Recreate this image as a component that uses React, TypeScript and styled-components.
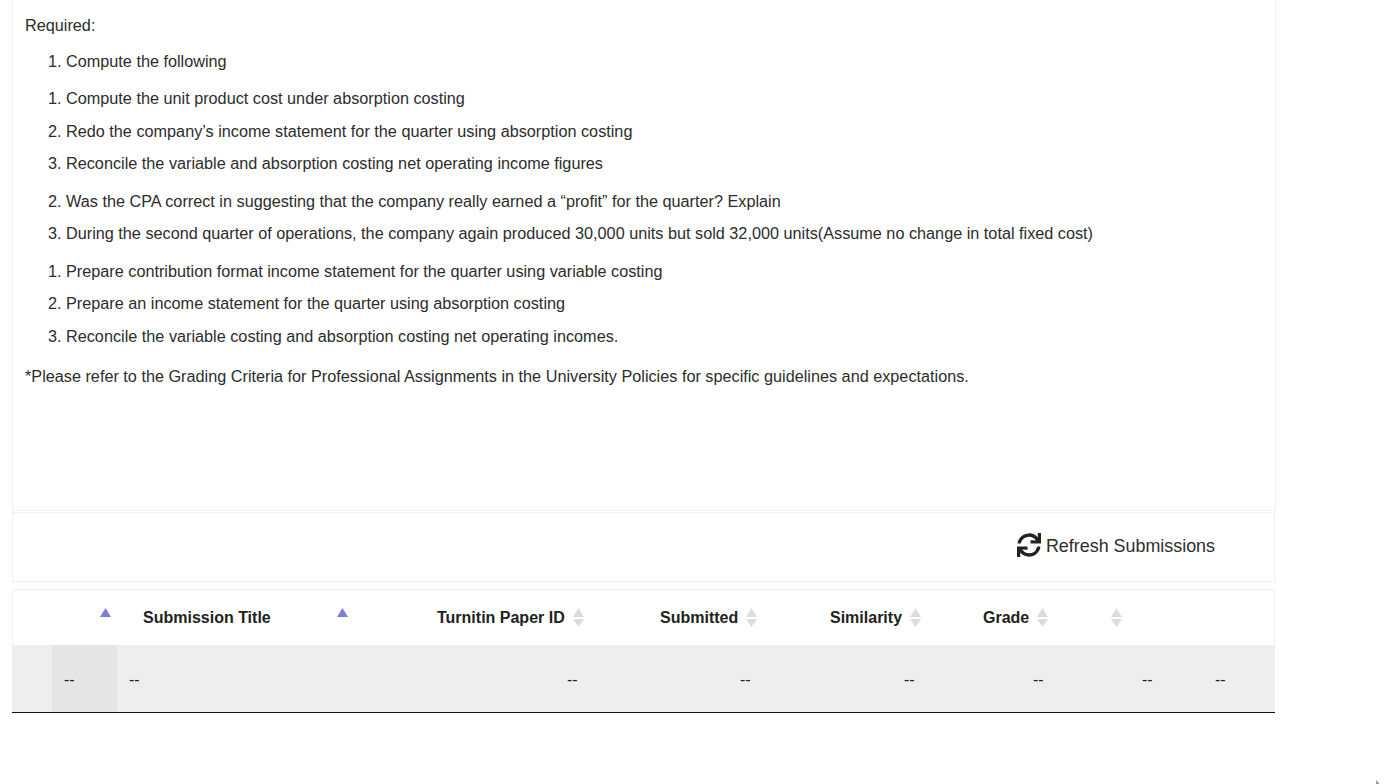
import React from 'react';
import styled, { createGlobalStyle } from 'styled-components';
import { FaSync } from 'react-icons/fa';

const GlobalStyle = createGlobalStyle`
  html, body {
    margin: 0;
    padding: 0;
    background: #fff;
    overflow: hidden;
    font-family: "Liberation Sans", Arial, sans-serif;
    color: #222;
  }
`;

const firstSteps = [
  'Compute the unit product cost under absorption costing',
  'Redo the company’s income statement for the quarter using absorption costing',
  'Reconcile the variable and absorption costing net operating income figures',
];

const lastSteps = [
  'Prepare contribution format income statement for the quarter using variable costing',
  'Prepare an income statement for the quarter using absorption costing',
  'Reconcile the variable costing and absorption costing net operating incomes.',
];

const App: React.FC = () => {
  return (
    <Page>
      <GlobalStyle />
      <Instructions>
        <Para>Required:</Para>
        <List>
          <Item $top={18}>Compute the following</Item>
        </List>
        <List>
          {firstSteps.map((s, i) => (
            <Item key={s} $top={i === 0 ? 19 : i === 1 ? 15 : 14}>{s}</Item>
          ))}
        </List>
        <List start={2}>
          <Item $top={20}>
            Was the CPA correct in suggesting that the company really earned a “profit” for the quarter? Explain
          </Item>
          <Item $top={14}>
            During the second quarter of operations, the company again produced 30,000 units but sold 32,000
            units(Assume no change in total fixed cost)
          </Item>
        </List>
        <List>
          {lastSteps.map((s, i) => (
            <Item key={s} $top={i === 0 ? 20 : i === 1 ? 14 : 15}>{s}</Item>
          ))}
        </List>
        <Footnote>
          *Please refer to the Grading Criteria for Professional Assignments in the University Policies for
          specific guidelines and expectations.
        </Footnote>
      </Instructions>

      <Toolbar>
        <RefreshButton>
          <RefreshIcon size={24} />
          Refresh Submissions
        </RefreshButton>
      </Toolbar>

      <TablePanel>
        <HeadRow>
          <HeadCell><SortUp /></HeadCell>
          <HeadCell>Submission Title<Spacer /><SortUp /></HeadCell>
          <HeadCell>Turnitin Paper ID<SortBoth /></HeadCell>
          <HeadCell>Submitted<SortBoth /></HeadCell>
          <HeadCell>Similarity<SortBoth /></HeadCell>
          <HeadCell>Grade<SortBoth /></HeadCell>
          <HeadCell><SortBoth /></HeadCell>
        </HeadRow>
        <BodyRow>
          <BodyCell />
          <BodyCell $shaded>--</BodyCell>
          <BodyCell>--</BodyCell>
          <BodyCell>--</BodyCell>
          <BodyCell>--</BodyCell>
          <BodyCell>--</BodyCell>
          <BodyCell>--</BodyCell>
          <BodyCell>--</BodyCell>
          <BodyCell>--</BodyCell>
        </BodyRow>
      </TablePanel>

      <CursorTip width="4" height="4" viewBox="0 0 4 4">
        <path d="M0 0 L3 3 V4 H0 Z" fill="#9a9a9a" />
      </CursorTip>
    </Page>
  );
};

const SortUp: React.FC = () => (
  <SortIcon width="11" height="19" viewBox="0 0 11 19">
    <path d="M5.5 0 L11 9 H0 Z" fill="#7a7fdc" />
  </SortIcon>
);

const SortBoth: React.FC = () => (
  <SortIcon width="11" height="19" viewBox="0 0 11 19">
    <path d="M5.5 0 L11 9 H0 Z" fill="#dcdcdc" />
    <path d="M5.5 19 L11 11 H0 Z" fill="#dcdcdc" />
  </SortIcon>
);

export default App;

const Page = styled.div`
  position: relative;
  width: 1394px;
  height: 784px;
  padding: 0 118px 0 12px;
  box-sizing: border-box;
`;

const Instructions = styled.section`
  height: 511px;
  box-sizing: border-box;
  padding: 16px 12px 0;
  border: 1px solid #f0f0f0;
  border-top: none;
  font-size: 16.24px;
  line-height: 18px;
  color: #2d2d2d;
`;

const Para = styled.p`
  margin: 0;
`;

const List = styled.ol`
  margin: 0;
  padding: 0 0 0 41px;
`;

const Item = styled.li<{ $top: number }>`
  margin-top: ${(p) => p.$top}px;
`;

const Footnote = styled.p`
  margin: 22px 0 0;
`;

const Toolbar = styled.section`
  height: 70px;
  margin: 1px 1px 0 0;
  box-sizing: border-box;
  padding: 0 59px 2px 0;
  border: 1px solid #f0f0f0;
  display: flex;
  justify-content: flex-end;
  align-items: center;
`;

const RefreshButton = styled.div`
  display: flex;
  align-items: center;
  gap: 5px;
  font-size: 17.9px;
  color: #2d2d2d;
`;

const RefreshIcon = styled(FaSync)`
  margin-bottom: 2px;
  color: #222;
`;

const TablePanel = styled.section`
  margin: 7px 1px 0 0;
  border: 1px solid #f0f0f0;
  border-bottom: none;
`;

const HeadRow = styled.div`
  height: 55px;
  padding-left: 87px;
  display: grid;
  grid-template-columns: 43px 294px 223px 170px 153px 128px 1fr;
  align-items: center;
  font-size: 16px;
  font-weight: 700;
`;

const HeadCell = styled.div`
  display: flex;
  align-items: center;
  gap: 8px;
`;

const Spacer = styled.span`
  width: 50px;
`;

const SortIcon = styled.svg`
  flex: none;
`;

const BodyRow = styled.div`
  height: 67px;
  background: #eee;
  border-bottom: 1px solid #111;
  margin: 0 -1px;
  display: grid;
  grid-template-columns: 40px 65px 438px 173px 164px 129px 109px 73px 1fr;
  font-size: 16px;
  line-height: 18px;
`;

const BodyCell = styled.div<{ $shaded?: boolean }>`
  padding: 26px 0 0 12px;
  background: ${(p) => (p.$shaded ? '#e6e6e6' : 'transparent')};
`;

const CursorTip = styled.svg`
  position: absolute;
  left: 1376px;
  top: 780px;
`;
